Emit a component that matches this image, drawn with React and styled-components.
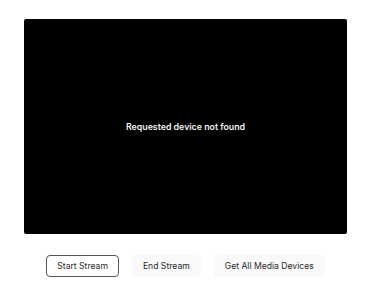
import React from "react"
import styled, { createGlobalStyle } from "styled-components"

const GlobalStyle = createGlobalStyle`
   body {
      margin: 0;
      background: #fff;
      font-family: Inter, "Noto Sans", sans-serif;
   }
`

const Page = styled.div`
   display: flex;
   flex-direction: column;
   align-items: center;
   padding-top: 19px;
`

const Screen = styled.div`
   width: 323px;
   height: 215px;
   margin-left: 1px;
   background: #000;
   border-radius: 2px;
   display: flex;
   align-items: center;
   justify-content: center;
`

const Message = styled.span`
   color: #f2f2f2;
   font-size: 8.8px;
   font-weight: 600;
   margin-top: -1px;
`

const Controls = styled.div`
   display: flex;
   gap: 13px;
   margin-top: 21px;
   margin-left: 1px;
`

const Button = styled.button`
   height: 22px;
   padding: 0 10px;
   font-family: Inter, "Noto Sans", sans-serif;
   font-size: 8.6px;
   color: #2a2a2a;
   background: ${(p) => (p.$outlined ? "#fff" : "#f9f9f9")};
   border: 1px solid ${(p) => (p.$outlined ? "#555" : "#f9f9f9")};
   border-radius: 4px;
`

const App = () => {
   return (
      <>
         <GlobalStyle />
         <Page>
            <Screen>
               <Message>Requested device not found</Message>
            </Screen>
            <Controls>
               <Button $outlined>Start Stream</Button>
               <Button>End Stream</Button>
               <Button>Get All Media Devices</Button>
            </Controls>
         </Page>
      </>
   )
}

export default App
